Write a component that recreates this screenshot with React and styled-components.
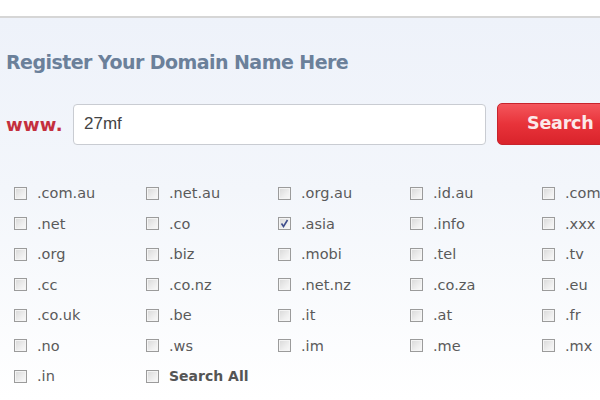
import React from "react";
import styled, { createGlobalStyle } from "styled-components";

const GlobalStyle = createGlobalStyle`
  html, body {
    margin: 0;
    padding: 0;
    width: 600px;
    height: 400px;
    overflow: hidden;
    background: #fff;
  }
`;

const Page = styled.div`
  width: 600px;
  height: 400px;
  overflow: hidden;
  display: flex;
  flex-direction: column;
`;

const TopBand = styled.div`
  height: 16px;
  background: #fff;
  border-bottom: 2px solid #d6d6d6;
  flex-shrink: 0;
`;

const Panel = styled.div`
  flex: 1;
  background: linear-gradient(to bottom, #eef2fa 0%, #f3f6fb 45%, #ffffff 100%);
  padding: 32px 0 0 6px;
`;

const Title = styled.h2`
  margin: 0;
  font-family: "DejaVu Sans", "Liberation Sans", sans-serif;
  font-weight: bold;
  font-size: 19px;
  letter-spacing: -0.55px;
  color: #6b809a;
  line-height: 24px;
`;

const SearchRow = styled.div`
  display: flex;
  align-items: center;
  margin-top: 29px;
  height: 42px;
`;

const Prefix = styled.span`
  flex-shrink: 0;
  font-family: "DejaVu Sans", "Liberation Sans", sans-serif;
  font-weight: bold;
  font-size: 18px;
  letter-spacing: 0.3px;
  color: #c4303e;
  width: 67px;
`;

const DomainInput = styled.div`
  flex-shrink: 0;
  box-sizing: border-box;
  width: 413px;
  height: 41px;
  background: #fff;
  border: 1px solid #c9ccd2;
  border-radius: 4px;
  display: flex;
  align-items: center;
  padding-left: 10px;
  font-family: "Liberation Sans", Arial, sans-serif;
  font-size: 17px;
  color: #444;
`;

const SearchButton = styled.button`
  flex-shrink: 0;
  box-sizing: border-box;
  margin-left: 11px;
  width: 120px;
  height: 42px;
  border: 1px solid #c8232c;
  border-radius: 5px;
  background: linear-gradient(to bottom, #f4565c 0%, #e8333a 50%, #d9232b 100%);
  color: #fbe9ea;
  font-family: "DejaVu Sans", "Liberation Sans", sans-serif;
  font-weight: bold;
  font-size: 17.5px;
  text-align: left;
  padding: 0 0 2px 29px;
  letter-spacing: -0.2px;
`;

const Grid = styled.div`
  display: grid;
  grid-template-columns: repeat(5, 132px);
  grid-auto-rows: 30.5px;
  margin-top: 33px;
  padding-left: 8px;
`;

const Option = styled.label`
  display: flex;
  align-items: center;
  white-space: nowrap;
  font-family: "DejaVu Sans", Verdana, sans-serif;
  font-size: ${(p) => (p.$bold ? "14px" : "14.5px")};
  font-weight: ${(p) => (p.$bold ? "bold" : "normal")};
  color: ${(p) => (p.$bold ? "#555" : "#5a5a5a")};
`;

const Box = styled.span`
  box-sizing: border-box;
  width: 13px;
  height: 13px;
  margin-right: 10px;
  border: 1px solid #9b9b9b;
  background: linear-gradient(135deg, #d8d8d8 0%, #eeeeee 60%, #fafafa 100%);
  box-shadow: inset 0 0 0 1px #f4f4f4;
  display: flex;
  align-items: center;
  justify-content: center;
  flex-shrink: 0;
`;

const domains = [
  ".com.au", ".net.au", ".org.au", ".id.au", ".com",
  ".net", ".co", ".asia", ".info", ".xxx",
  ".org", ".biz", ".mobi", ".tel", ".tv",
  ".cc", ".co.nz", ".net.nz", ".co.za", ".eu",
  ".co.uk", ".be", ".it", ".at", ".fr",
  ".no", ".ws", ".im", ".me", ".mx",
  ".in",
];

const Check = () => (
  <svg width="9" height="9" viewBox="0 0 9 9">
    <path d="M1.5 4.5 L3.5 7.5 L7.5 1" fill="none" stroke="#3f4e8c" strokeWidth="1.6" />
  </svg>
);

export default function App() {
  return (
    <Page>
      <GlobalStyle />
      <TopBand />
      <Panel>
        <Title>Register Your Domain Name Here</Title>
        <SearchRow>
          <Prefix>www.</Prefix>
          <DomainInput>27mf</DomainInput>
          <SearchButton>Search</SearchButton>
        </SearchRow>
        <Grid>
          {domains.map((d) => (
            <Option key={d}>
              <Box>{d === ".asia" && <Check />}</Box>
              {d}
            </Option>
          ))}
          <Option $bold>
            <Box />
            Search All
          </Option>
        </Grid>
      </Panel>
    </Page>
  );
}
